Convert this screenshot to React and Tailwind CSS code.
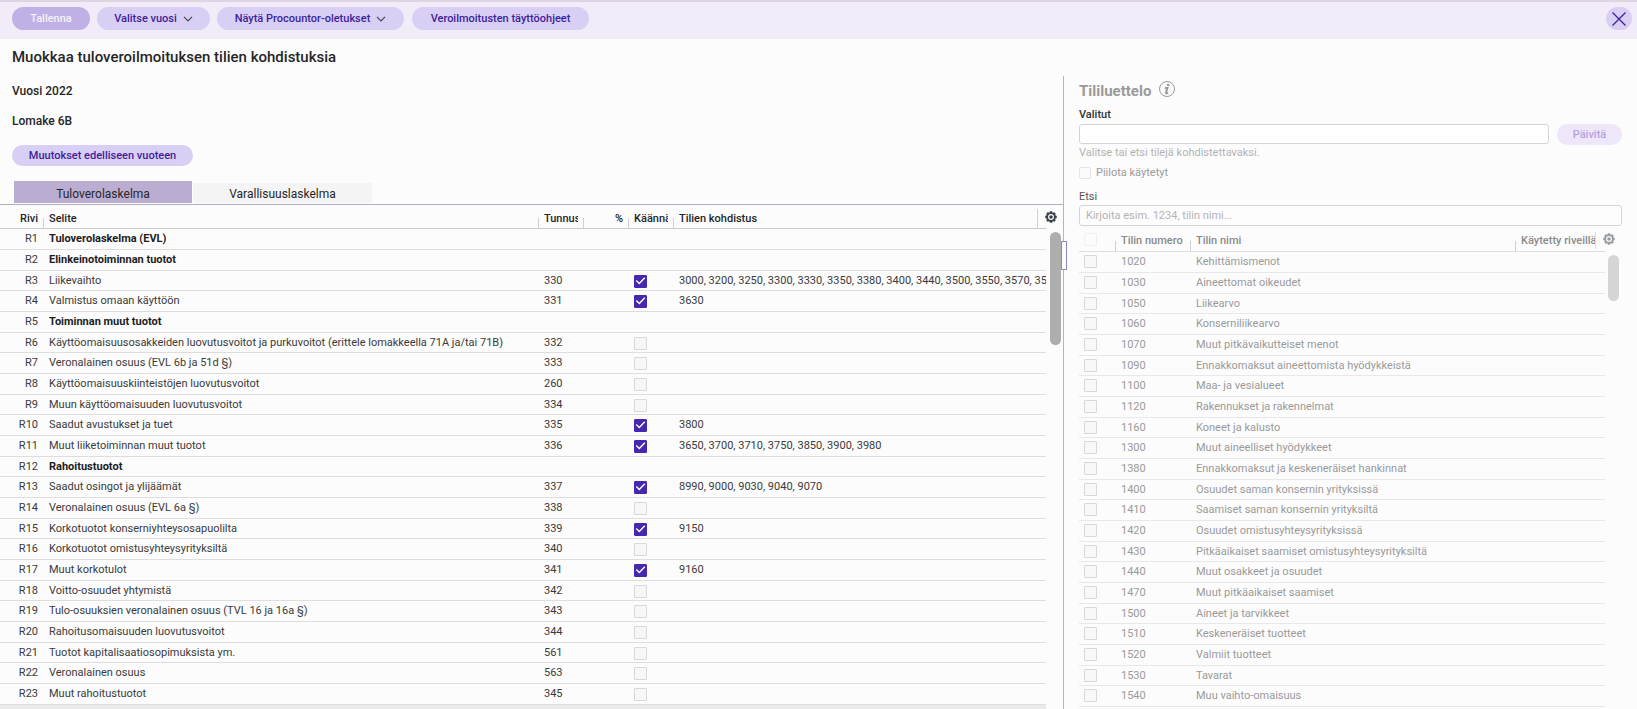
import { useState } from "react";
import clsx from "clsx";

const taxRows = [
  { title: "Tuloverolaskelma (EVL)" },
  { title: "Elinkeinotoiminnan tuotot" },
  {
    name: "Liikevaihto",
    code: "330",
    checked: true,
    accounts:
      "3000, 3200, 3250, 3300, 3330, 3350, 3380, 3400, 3440, 3500, 3550, 3570, 3580, 3590, 3600",
  },
  { name: "Valmistus omaan käyttöön", code: "331", checked: true, accounts: "3630" },
  { title: "Toiminnan muut tuotot" },
  {
    name: "Käyttöomaisuusosakkeiden luovutusvoitot ja purkuvoitot (erittele lomakkeella 71A ja/tai 71B)",
    code: "332",
  },
  { name: "Veronalainen osuus (EVL 6b ja 51d §)", code: "333" },
  { name: "Käyttöomaisuuskiinteistöjen luovutusvoitot", code: "260" },
  { name: "Muun käyttöomaisuuden luovutusvoitot", code: "334" },
  { name: "Saadut avustukset ja tuet", code: "335", checked: true, accounts: "3800" },
  {
    name: "Muut liiketoiminnan muut tuotot",
    code: "336",
    checked: true,
    accounts: "3650, 3700, 3710, 3750, 3850, 3900, 3980",
  },
  { title: "Rahoitustuotot" },
  {
    name: "Saadut osingot ja ylijäämät",
    code: "337",
    checked: true,
    accounts: "8990, 9000, 9030, 9040, 9070",
  },
  { name: "Veronalainen osuus (EVL 6a §)", code: "338" },
  { name: "Korkotuotot konserniyhteysosapuolilta", code: "339", checked: true, accounts: "9150" },
  { name: "Korkotuotot omistusyhteysyrityksiltä", code: "340" },
  { name: "Muut korkotulot", code: "341", checked: true, accounts: "9160" },
  { name: "Voitto-osuudet yhtymistä", code: "342" },
  { name: "Tulo-osuuksien veronalainen osuus (TVL 16 ja 16a §)", code: "343" },
  { name: "Rahoitusomaisuuden luovutusvoitot", code: "344" },
  { name: "Tuotot kapitalisaatiosopimuksista ym.", code: "561" },
  { name: "Veronalainen osuus", code: "563" },
  { name: "Muut rahoitustuotot", code: "345" },
];

const accountRows = [
  ["1020", "Kehittämismenot"],
  ["1030", "Aineettomat oikeudet"],
  ["1050", "Liikearvo"],
  ["1060", "Konserniliikearvo"],
  ["1070", "Muut pitkävaikutteiset menot"],
  ["1090", "Ennakkomaksut aineettomista hyödykkeistä"],
  ["1100", "Maa- ja vesialueet"],
  ["1120", "Rakennukset ja rakennelmat"],
  ["1160", "Koneet ja kalusto"],
  ["1300", "Muut aineelliset hyödykkeet"],
  ["1380", "Ennakkomaksut ja keskeneräiset hankinnat"],
  ["1400", "Osuudet saman konsernin yrityksissä"],
  ["1410", "Saamiset saman konsernin yrityksiltä"],
  ["1420", "Osuudet omistusyhteysyrityksissä"],
  ["1430", "Pitkäaikaiset saamiset omistusyhteysyrityksiltä"],
  ["1440", "Muut osakkeet ja osuudet"],
  ["1470", "Muut pitkäaikaiset saamiset"],
  ["1500", "Aineet ja tarvikkeet"],
  ["1510", "Keskeneräiset tuotteet"],
  ["1520", "Valmiit tuotteet"],
  ["1530", "Tavarat"],
  ["1540", "Muu vaihto-omaisuus"],
];

function GearIcon({ className }) {
  return (
    <svg viewBox="0 0 24 24" className={className} fill="none" stroke="currentColor">
      <circle cx="12" cy="12" r="7.8" strokeWidth="3.8" />
      <circle cx="12" cy="12" r="1.8" strokeWidth="3.6" />
      <path
        strokeWidth="5"
        d="M12 4.500V.5M12 23.500v-4M4.500 12h-4M23.500 12h-4M6.700 6.700 4 4M20 20l-2.700-2.700M6.700 17.300 4 20M20 4l-2.700 2.700"
      />
    </svg>
  );
}

function InfoIcon({ className }) {
  return (
    <svg viewBox="0 0 16 16" className={className} fill="none" stroke="currentColor">
      <circle cx="8" cy="8" r="7.5" strokeWidth="1" />
      <circle cx="9.200" cy="4" r="1.300" fill="currentColor" stroke="none" />
      <path strokeWidth="2" d="M5.900 6.900h2.500L7 11.700c-.1.700.600.900 2 .1" />
    </svg>
  );
}

function PillButton({ children, className, chevron, ...props }) {
  return (
    <button
      type="button"
      className={clsx(
        "flex items-center justify-center gap-1.5 rounded-full pt-px font-medium",
        className
      )}
      {...props}
    >
      {children}
      {chevron && (
        <svg viewBox="0 0 10 6" className="h-1.5 w-2.5 shrink-0" fill="none" stroke="#4b4360" strokeWidth="1.2">
          <path d="M1 .8l4 4 4-4" />
        </svg>
      )}
    </button>
  );
}

function RowCheckbox({ label, defaultChecked }) {
  return (
    <span className="relative mt-1 block size-[13px]">
      <input
        type="checkbox"
        aria-label={label}
        defaultChecked={defaultChecked}
        className="peer block size-[13px] appearance-none rounded-[1px] border border-[#d8d8d8] bg-[#f7f7f7] checked:border-[#4527b0] checked:bg-[#4527b0]"
      />
      <svg
        viewBox="0 0 13 13"
        className="pointer-events-none absolute inset-0 hidden size-[13px] peer-checked:block"
        fill="none"
        stroke="white"
        strokeWidth="1.4"
      >
        <path d="M2.300 5.600l3 3L10.800 2.800" />
      </svg>
    </span>
  );
}

function HeadCell({ children, className, tick = true }) {
  return (
    <th
      scope="col"
      className={clsx("relative h-6 border-b p-0 align-top font-medium whitespace-nowrap", className)}
    >
      <div className="h-[23px] overflow-hidden">{children}</div>
      {tick && <span className="absolute right-0 bottom-0 h-2.5 w-px bg-[#d0d0d0]" />}
    </th>
  );
}

const cell = "overflow-hidden border-b p-0 align-top leading-[19px] whitespace-nowrap";

function TaxTable() {
  return (
    <div className="flex">
      <div className="min-w-0 flex-1">
        <table className="w-full table-fixed border-separate border-spacing-0 text-left text-[11px] text-[#3a3a3a]">
          <colgroup>
            <col className="w-11" />
            <col className="w-[495px]" />
            <col className="w-[45px]" />
            <col className="w-[45px]" />
            <col className="w-[45px]" />
            <col />
            <col className="w-2" />
          </colgroup>
          <thead className="leading-[27px] text-[#262626]">
            <tr>
              <HeadCell className="border-[#c9c9c9] pr-1.5 text-right">Rivi</HeadCell>
              <HeadCell className="border-[#c9c9c9] pl-[5px]">Selite</HeadCell>
              <HeadCell className="border-[#c9c9c9] pr-1.5 pl-[5px]">Tunnus</HeadCell>
              <HeadCell className="border-[#c9c9c9] pr-1.5 text-right">%</HeadCell>
              <HeadCell className="border-[#c9c9c9] pr-1.5 pl-[5px]">Käännä</HeadCell>
              <HeadCell className="border-[#c9c9c9] pl-[5px]" tick={false}>
                Tilien kohdistus
                <span className="absolute top-1 right-0 bottom-0 w-px bg-[#d0d0d0]" />
              </HeadCell>
              <td className="border-b border-[#c9c9c9] p-0" />
            </tr>
          </thead>
          <tbody>
            {taxRows.map((row, i) => (
              <tr key={i} className="h-[21px] nth-[3n]:h-5">
                <td className={clsx(cell, "border-[#dedede] pr-1.5 text-right")}>R{i + 1}</td>
                <td
                  className={clsx(
                    cell,
                    "border-[#dedede] pl-[5px]",
                    row.title && "font-bold text-[#1c1c1c]"
                  )}
                >
                  {row.title || row.name}
                </td>
                <td className={clsx(cell, "border-[#dedede] pl-[5px]")}>{row.code}</td>
                <td className={clsx(cell, "border-[#dedede]")} />
                <td className={clsx(cell, "border-[#dedede] pl-[5px]")}>
                  {row.code && <RowCheckbox label={`Käännä ${row.code}`} defaultChecked={row.checked} />}
                </td>
                <td colSpan={2} className={clsx(cell, "border-[#dedede] pl-[5px]")}>
                  {row.accounts}
                </td>
              </tr>
            ))}
          </tbody>
        </table>
      </div>
      <div className="flex w-[17px] shrink-0 flex-col items-end pr-0.5">
        <button
          type="button"
          aria-label="Taulukon asetukset"
          className="-ml-1 flex h-6 items-center pr-1 text-[#3a4048]"
        >
          <GearIcon className="size-3" />
        </button>
        <div className="mt-[3px] h-[113px] w-[11px] rounded-full bg-[#aeaeae]" />
      </div>
    </div>
  );
}

function AccountPanel() {
  return (
    <aside className="w-[573px] shrink-0 px-[15px] pt-[3px] text-[11px] text-[#9a9a9a]">
      <div className="flex h-7 items-start gap-2">
        <h2 className="text-[15px] leading-6 font-bold">Tililuettelo</h2>
        <InfoIcon className="mt-0.5 size-4" />
      </div>
      <label htmlFor="selected" className="block h-[17px] leading-4 font-medium text-[#333]">
        Valitut
      </label>
      <div className="flex gap-2">
        <input
          id="selected"
          type="text"
          disabled
          className="h-5 min-w-0 flex-1 rounded-[3px] border border-[#d5d5d5] bg-white px-1.5"
        />
        <PillButton disabled className="h-[21px] w-[65px] bg-[#ede7f9] text-[#b5a3dd]">
          Päivitä
        </PillButton>
      </div>
      <p className="leading-4 text-[#b3b3b3]">Valitse tai etsi tilejä kohdistettavaksi.</p>
      <label className="mt-[3px] flex h-[18px] gap-[5px] leading-[17px]">
        <input
          type="checkbox"
          disabled
          className="mt-[3px] size-3 appearance-none rounded-[2px] border border-[#e6e6e6] bg-[#fafafa]"
        />
        Piilota käytetyt
      </label>
      <label htmlFor="search" className="mt-[7px] block h-4 leading-4 text-[#555]">
        Etsi
      </label>
      <input
        id="search"
        type="text"
        disabled
        placeholder="Kirjoita esim. 1234, tilin nimi..."
        className="mb-0.5 block h-[21px] w-full rounded-[3px] border border-[#d5d5d5] bg-[#fdfdfd] px-1.5 placeholder:text-[#b3b3b3]"
      />
      <div className="flex">
        <div className="min-w-0 flex-1">
          <table className="w-full table-fixed border-separate border-spacing-0 text-left">
            <colgroup>
              <col className="w-[37px]" />
              <col className="w-[75px]" />
              <col />
              <col className="w-20" />
              <col className="w-[9px]" />
            </colgroup>
            <thead className="leading-[25px] text-[#8a8a8a]">
              <tr>
                <HeadCell className="border-[#dedede] pl-[5px]">
                  <input
                    type="checkbox"
                    disabled
                    aria-label="Valitse kaikki"
                    className="mt-[5px] block size-[13px] appearance-none rounded-[2px] border border-[#f0f0f0]"
                  />
                </HeadCell>
                <HeadCell className="border-[#dedede] pl-[5px]">Tilin numero</HeadCell>
                <HeadCell className="border-[#dedede] pl-[5px]">Tilin nimi</HeadCell>
                <HeadCell className="border-[#dedede] pl-[5px]" tick={false}>
                  Käytetty riveillä
                  <span className="absolute top-1 right-0 bottom-0.5 w-px bg-[#dedede]" />
                </HeadCell>
                <td className="border-b border-[#dedede] p-0" />
              </tr>
            </thead>
            <tbody>
              {accountRows.map(([number, name]) => (
                <tr key={number} className="h-[21px] nth-[3n]:h-5">
                  <td className={clsx(cell, "border-[#e8e8e8] pl-[5px]")}>
                    <input
                      type="checkbox"
                      disabled
                      aria-label={`Valitse ${number}`}
                      className="mt-[3px] block size-[13px] appearance-none rounded-[1px] border border-[#d8d8d8] bg-[#f8f8f8]"
                    />
                  </td>
                  <td className={clsx(cell, "border-[#e8e8e8] pl-[5px]")}>{number}</td>
                  <td className={clsx(cell, "border-[#e8e8e8] pl-[5px]")}>{name}</td>
                  <td colSpan={2} className={clsx(cell, "border-[#e8e8e8]")} />
                </tr>
              ))}
            </tbody>
          </table>
        </div>
        <div className="flex w-[17px] shrink-0 flex-col items-end pr-[3px]">
          <button
            type="button"
            disabled
            aria-label="Tililuettelon asetukset"
            className="-ml-1 flex h-[22px] items-center pr-1 text-[#999ca0]"
          >
            <GearIcon className="size-3" />
          </button>
          <div className="mt-[5px] h-[46px] w-[11px] rounded-full bg-[#d5d5d5]" />
        </div>
      </div>
    </aside>
  );
}

export default function App() {
  const [tab, setTab] = useState("income");

  return (
    <div className="flex h-screen flex-col overflow-hidden bg-[#fcfcfc] font-['Roboto','Noto_Sans',sans-serif] text-[#262626]">
      {/* Toolbar */}
      <header className="flex items-start border-t-2 border-b border-t-[#ddd6e2] border-b-[#efe9f5] bg-[#f2ecf8] pt-[5px] pr-[5px] pb-2 pl-3 text-[11px]">
        <PillButton disabled className="mr-[7px] h-[23px] w-[78px] bg-[#bfb0e5] text-[#f6f2fd]">
          Tallenna
        </PillButton>
        <PillButton chevron className="mr-[7px] h-[23px] w-[113px] bg-[#d9cff4] text-[#3d1f9b]">
          Valitse vuosi
        </PillButton>
        <PillButton chevron className="mr-2 h-[23px] w-[187px] bg-[#d9cff4] text-[#3d1f9b]">
          Näytä Procountor-oletukset
        </PillButton>
        <PillButton className="h-[23px] w-[177px] bg-[#d9cff4] text-[#3d1f9b]">
          Veroilmoitusten täyttöohjeet
        </PillButton>
        <button
          type="button"
          aria-label="Sulje"
          className="ml-auto flex h-[23px] w-[26px] items-center justify-center rounded-full bg-[#d9cff4] text-[#3d1f9b]"
        >
          <svg viewBox="0 0 14 14" className="size-3.5" fill="none" stroke="currentColor" strokeWidth="1.3">
            <path d="M.5.5l13 13M13.500.5l-13 13" />
          </svg>
        </button>
      </header>

      <h1 className="px-3 pt-2 pb-[9px] text-[15px] leading-5 font-medium">
        Muokkaa tuloveroilmoituksen tilien kohdistuksia
      </h1>

      <div className="flex min-h-0 flex-1">
        {/* Form rows */}
        <main className="relative flex min-w-0 flex-1 flex-col border-r border-[#b5b5b9]">
          <div className="flex flex-col items-start gap-2.5 px-3 pt-[5px] text-xs">
            <p className="leading-5 font-medium">Vuosi 2022</p>
            <p className="leading-5 font-medium">Lomake 6B</p>
            <PillButton className="mt-1 h-[21px] w-[181px] bg-[#d9cff4] text-[11px] text-[#3d1f9b]">
              Muutokset edelliseen vuoteen
            </PillButton>
          </div>

          <div
            role="tablist"
            className="mt-[15px] flex items-end gap-px border-b border-[#b3aebb] pb-px pl-3.5 text-xs"
          >
            <button
              type="button"
              role="tab"
              aria-selected={tab === "income"}
              onClick={() => setTab("income")}
              className={clsx("w-[178px]", tab === "income" ? "h-[22px] bg-[#bbadd1] pt-1" : "h-5 bg-[#f4f4f4] pt-0.5")}
            >
              Tuloverolaskelma
            </button>
            <button
              type="button"
              role="tab"
              aria-selected={tab === "assets"}
              onClick={() => setTab("assets")}
              className={clsx("w-[179px]", tab === "assets" ? "h-[22px] bg-[#bbadd1] pt-1" : "h-5 bg-[#f4f4f4] pt-0.5")}
            >
              Varallisuuslaskelma
            </button>
          </div>

          <TaxTable />
          <div className="mr-[17px] h-[13px] bg-[#ebebeb]" />

          {/* Splitter handle */}
          <div className="absolute top-[165px] -right-1 z-10 h-[29px] w-1.5 border border-[#8f86bd] bg-[#fcfcfc]" />
        </main>

        <AccountPanel />
      </div>
    </div>
  );
}
